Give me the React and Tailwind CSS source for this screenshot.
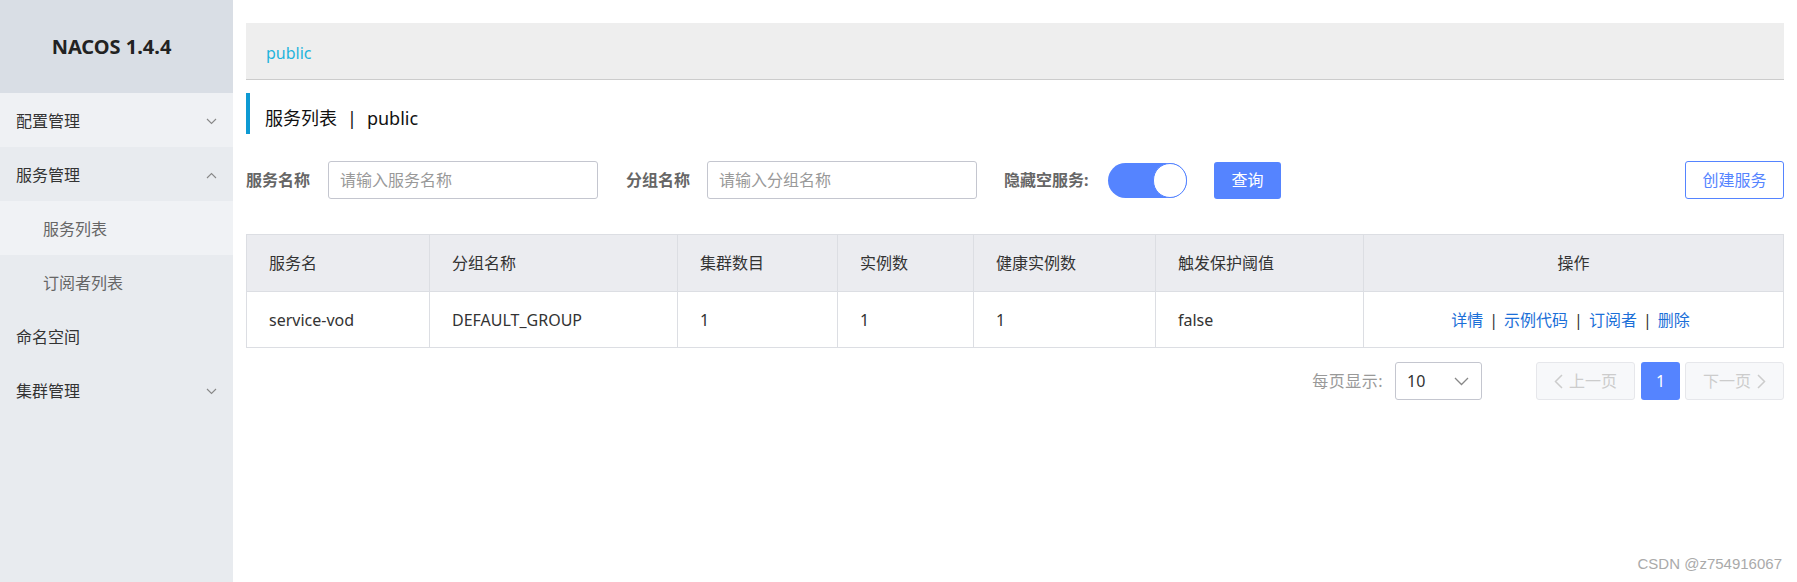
import React from "react";

const font = { fontFamily: '"Noto Sans", "Noto Sans CJK SC", sans-serif' };

const Chevron = ({ up }) => (
  <svg width="11" height="7" viewBox="0 0 11 7" fill="none" stroke="#888" strokeWidth="1.1">
    {up ? <path d="M1 6 L5.5 1.5 L10 6" /> : <path d="M1 1 L5.5 5.5 L10 1" />}
  </svg>
);

const menu = [
  { label: "配置管理", arrow: "down", bg: "bg-[#eff1f4]" },
  { label: "服务管理", arrow: "up", bg: "bg-[#e8ebef]" },
  { label: "服务列表", sub: true, bg: "bg-[#f0f2f5]" },
  { label: "订阅者列表", sub: true, bg: "bg-[#e8ebef]" },
  { label: "命名空间", bg: "bg-[#e8ebef]" },
  { label: "集群管理", arrow: "down", bg: "bg-[#e8ebef]" },
];

const columns = ["服务名", "分组名称", "集群数目", "实例数", "健康实例数", "触发保护阈值"];
const row = ["service-vod", "DEFAULT_GROUP", "1", "1", "1", "false"];

const Sidebar = () => (
  <aside className="w-[233px] shrink-0 bg-[#e8ebef]">
    <div className="h-[93px] bg-[#d9dee5] flex items-center justify-center">
      <span className="text-[20px] font-bold text-[#222] mr-[10px]">NACOS 1.4.4</span>
    </div>
    {menu.map((m) => (
      <div
        key={m.label}
        className={`h-[54px] flex items-center justify-between pr-[16px] pt-[2px] ${m.bg} ${
          m.sub ? "pl-[43px] text-[#666]" : "pl-[16px] text-[#333]"
        } text-[16px]`}
      >
        <span>{m.label}</span>
        {m.arrow && <Chevron up={m.arrow === "up"} />}
      </div>
    ))}
  </aside>
);

const Filters = () => (
  <div className="flex items-center h-[38px] mt-[27px] text-[16px]">
    <span className="font-bold text-[#666] w-[82px]">服务名称</span>
    <div className="w-[270px] h-[38px] border border-[#c4c6cf] rounded-[3px] flex items-center pl-[11px] text-[#999]">
      请输入服务名称
    </div>
    <span className="font-bold text-[#666] ml-[28px] w-[81px]">分组名称</span>
    <div className="w-[270px] h-[38px] border border-[#c4c6cf] rounded-[3px] flex items-center pl-[11px] text-[#999]">
      请输入分组名称
    </div>
    <span className="font-bold text-[#666] ml-[27px] w-[104px]">隐藏空服务:</span>
    <div className="w-[79px] h-[35px] rounded-full bg-[#5584ff] flex items-center justify-end">
      <div className="w-[34px] h-[35px] rounded-full bg-white border border-[#5584ff]" />
    </div>
    <button className="ml-[27px] w-[67px] h-[37px] rounded-[3px] bg-[#5584ff] text-white">查询</button>
    <button className="ml-auto w-[99px] h-[38px] rounded-[3px] border border-[#5584ff] text-[#5584ff] bg-white">
      创建服务
    </button>
  </div>
);

const Table = () => (
  <div className="mt-[35px] border border-[#dcdee3] text-[16px] text-[#333]">
    <div className="grid grid-cols-[183px_248px_160px_136px_182px_208px_1fr] h-[57px] bg-[#ebecf0] border-b border-[#dcdee3]">
      {columns.map((c) => (
        <div key={c} className="flex items-center pl-[22px] border-r border-[#dcdee3]">{c}</div>
      ))}
      <div className="flex items-center justify-center">操作</div>
    </div>
    <div className="grid grid-cols-[183px_248px_160px_136px_182px_208px_1fr] h-[55px]">
      {row.map((c, i) => (
        <div key={i} className="flex items-center pl-[22px] border-r border-[#dcdee3]">{c}</div>
      ))}
      <div className="flex items-center justify-center gap-[6px] pr-[6px]">
        <span className="text-[#1b6fd8]">详情</span>
        <span>|</span>
        <span className="text-[#1b6fd8]">示例代码</span>
        <span>|</span>
        <span className="text-[#1b6fd8]">订阅者</span>
        <span>|</span>
        <span className="text-[#1b6fd8]">删除</span>
      </div>
    </div>
  </div>
);

const Pagination = () => (
  <div className="flex items-center justify-end mt-[14px] h-[38px] text-[16px]">
    <span className="text-[#999] mr-[12px] tracking-[0.5px]">每页显示:</span>
    <div className="w-[87px] h-[38px] border border-[#c4c6cf] rounded-[3px] flex items-center justify-between pl-[11px] pr-[12px] text-[#333]">
      <span>10</span>
      <svg width="15" height="9" viewBox="0 0 15 9" fill="none" stroke="#888" strokeWidth="1.3">
        <path d="M1 1 L7.5 7.5 L14 1" />
      </svg>
    </div>
    <div className="ml-[54px] w-[99px] h-[38px] border border-[#e6e7eb] bg-[#f7f8fa] rounded-[3px] flex items-center justify-center gap-[6px] text-[#ccc]">
      <svg width="9" height="15" viewBox="0 0 9 15" fill="none" stroke="#ccc" strokeWidth="1.5">
        <path d="M8 1 L1.5 7.5 L8 14" />
      </svg>
      <span>上一页</span>
    </div>
    <div className="ml-[6px] w-[39px] h-[38px] rounded-[3px] bg-[#5584ff] text-white flex items-center justify-center">1</div>
    <div className="ml-[5px] w-[99px] h-[38px] border border-[#e6e7eb] bg-[#f7f8fa] rounded-[3px] flex items-center justify-center gap-[6px] text-[#ccc]">
      <span>下一页</span>
      <svg width="9" height="15" viewBox="0 0 9 15" fill="none" stroke="#ccc" strokeWidth="1.5">
        <path d="M1 1 L7.5 7.5 L1 14" />
      </svg>
    </div>
  </div>
);

export default function App() {
  return (
    <div className="relative flex w-[1797px] h-[582px] bg-white overflow-hidden" style={font}>
      <Sidebar />
      <main className="flex-1 px-[13px] pt-[23px]">
        <div className="h-[57px] bg-[#eeeeee] border-b border-[#cccccc] flex items-center pl-[20px] pt-[4px]">
          <span className="text-[16px] text-[#1fb4dc]">public</span>
        </div>
        <div className="mt-[13px] h-[41px] border-l-4 border-[#0e9ad3] flex items-center pl-[15px] pt-[10px] text-[18px] text-[#111]">
          <span>服务列表</span>
          <span className="mx-[10px]">|</span>
          <span>public</span>
        </div>
        <Filters />
        <Table />
        <Pagination />
      </main>
      <span
        className="absolute right-[15px] bottom-[7px] text-[15px] text-[#aaa]"
        style={{ fontFamily: '"Liberation Sans", Arial, sans-serif' }}
      >
        CSDN @z754916067
      </span>
    </div>
  );
}
